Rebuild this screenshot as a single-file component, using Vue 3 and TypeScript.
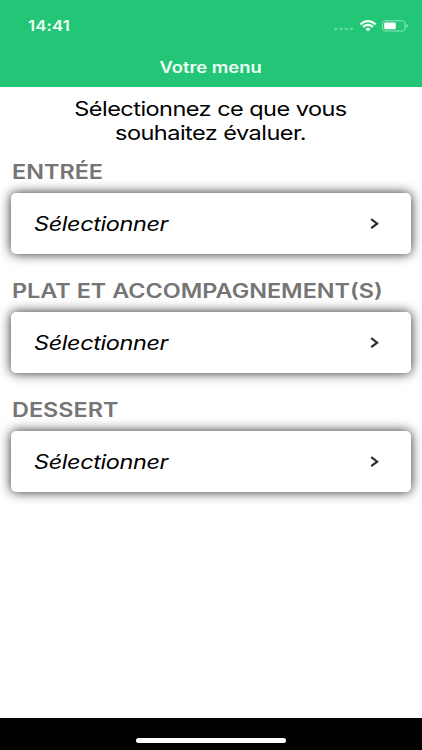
<script setup lang="ts">
interface Course {
  id: string
  label: string
}

const courses: Course[] = [
  { id: 'starter', label: 'ENTRÉE' },
  { id: 'main', label: 'PLAT ET ACCOMPAGNEMENT(S)' },
  { id: 'dessert', label: 'DESSERT' },
]
</script>

<template>
  <div class="screen">
    <header class="header">
      <div class="status">
        <span class="time wide">14:41</span>
        <div class="indicators">
          <svg class="dots" width="20" height="4" viewBox="0 0 20 4">
            <rect v-for="n in 4" :key="n" :x="(n - 1) * 5.2" y="0.5" width="3.6" height="2.8" rx="1.3" />
          </svg>
          <svg class="wifi" width="18" height="12" viewBox="0 0 18 12">
            <path d="M1.3 4.3Q9 -2 16.7 4.3" />
            <path d="M4 6.9Q9 2.8 14 6.9" />
            <path class="core" d="M6.3 8.9Q9 6.7 11.7 8.9L9 11.2Z" />
          </svg>
          <svg class="battery" width="27" height="12" viewBox="0 0 27 12">
            <rect class="shell" x="0.6" y="0.8" width="22.4" height="10.2" rx="2.6" />
            <rect class="level" x="2.2" y="2.5" width="11.6" height="6.8" rx="1.2" />
            <path class="tip" d="M24.3 4.2Q26 4.6 26 5.9T24.3 7.6Z" />
          </svg>
        </div>
      </div>
      <h1 class="title"><span class="wide">Votre menu</span></h1>
    </header>

    <main class="content">
      <p class="intro"><span class="wide">Sélectionnez ce que vous<br />souhaitez évaluer.</span></p>
      <section v-for="course in courses" :key="course.id" class="course">
        <h2 class="label"><span class="wide">{{ course.label }}</span></h2>
        <button class="card" type="button">
          <span class="choice wide">Sélectionner</span>
          <svg class="chevron" width="10" height="12" viewBox="0 0 10 12">
            <path d="M1.2 1.2L7.2 5.7L1.2 10.2" />
          </svg>
        </button>
      </section>
    </main>

    <footer class="footer"><div class="home"></div></footer>
  </div>
</template>

<style>
body {
  margin: 0;
}
</style>

<style scoped>
.screen {
  display: flex;
  flex-direction: column;
  width: 422px;
  height: 750px;
  overflow: hidden;
  background: #fff;
  font-family: Inter, "Liberation Sans", sans-serif;
}

.wide {
  display: inline-block;
  white-space: nowrap;
  transform: scaleX(1.2);
  transform-origin: left center;
}

.header {
  box-sizing: border-box;
  flex: none;
  height: 87px;
  background: #23c676;
  color: #effff5;
}

.status {
  display: flex;
  align-items: center;
  justify-content: space-between;
  height: 51px;
  padding: 0 13px 0 27.5px;
}

.time {
  font-size: 14px;
  font-weight: 600;
  letter-spacing: 0.1px;
}

.indicators {
  display: flex;
  align-items: center;
}

.dots {
  margin: 7px 5px 0 0;
  fill: #5bd699;
}

.wifi {
  margin-right: 5px;
  fill: none;
  stroke: #effff5;
  stroke-width: 2.2;
}

.wifi .core {
  fill: #effff5;
  stroke: none;
}

.shell {
  fill: none;
  stroke: #92e5bb;
  stroke-width: 1;
}

.level {
  fill: #fff;
}

.tip {
  fill: #92e5bb;
}

.title {
  margin: 0;
  font-size: 15.3px;
  font-weight: 600;
  line-height: 33px;
  text-align: center;
}

.title .wide,
.intro .wide {
  transform-origin: center;
}

.content {
  flex: 1;
  padding: 10px 11px 0;
}

.intro {
  margin: 0;
  font-size: 19.6px;
  line-height: 24px;
  letter-spacing: -0.45px;
  color: #000;
  text-align: center;
}

.course {
  height: 119px;
}

.label {
  height: 48px;
  margin: 0;
  padding-left: 0.5px;
  font-size: 19.5px;
  font-weight: 600;
  line-height: 54px;
  color: #757575;
}

.card {
  display: flex;
  align-items: center;
  justify-content: space-between;
  box-sizing: border-box;
  width: 100%;
  height: 61px;
  padding: 0 31px 0 23px;
  border: 0;
  border-radius: 5px;
  background: #fff;
  box-shadow: 0 0 12px rgba(0, 0, 0, 0.85);
  font-family: inherit;
  font-size: 19.5px;
  font-style: italic;
  letter-spacing: -0.3px;
  color: #000;
}

.chevron {
  fill: none;
  stroke: #2b2b2b;
  stroke-width: 2.1;
}

.footer {
  display: flex;
  justify-content: center;
  flex: none;
  box-sizing: border-box;
  height: 32px;
  padding-top: 19.5px;
  background: #000;
}

.home {
  width: 150px;
  height: 5px;
  border-radius: 3px;
  background: #fff;
}
</style>
